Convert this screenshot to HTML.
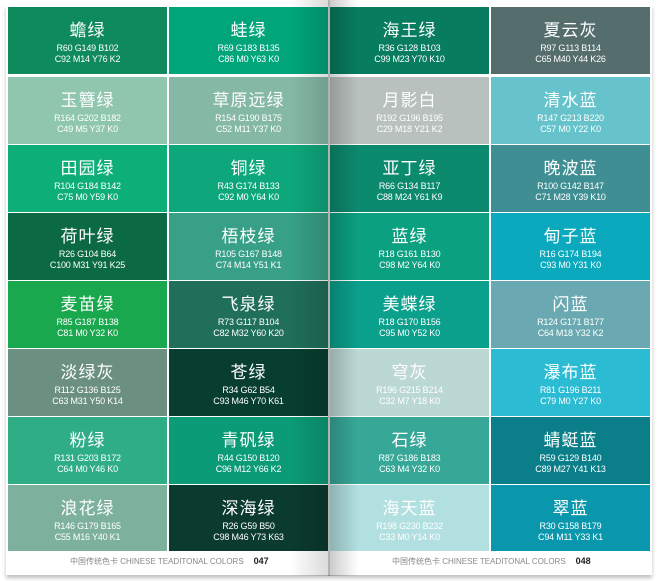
<!DOCTYPE html><html><head><meta charset="utf-8"><style>
body{margin:0;width:658px;height:581px;background:#fff;position:relative;overflow:hidden;font-family:"Liberation Sans","Noto Sans CJK SC",sans-serif}
.c{position:absolute;color:#fff;text-align:center;width:159px;height:67px}
.n{position:absolute;top:14px;left:0;right:0;font-size:17px;line-height:19px;letter-spacing:1px}
.v{position:absolute;top:36px;left:0;right:0;font-size:9px;line-height:11px;letter-spacing:-0.2px}
.f{position:absolute;top:555px;font-size:8px;color:#888;white-space:nowrap;line-height:12px}
.f b{color:#222;font-size:9px;margin-left:10px}
.sh{position:absolute;top:0;height:576px;pointer-events:none}
</style></head><body>
<div style="position:absolute;left:6px;top:5px;width:646px;height:570px;box-shadow:0 3px 4px rgba(0,0,0,0.25);background:#fff"></div>
<div id="g"></div>
<script>
var X=[8,169,330,491],Y=[7,77,145,213,281,349,417,485];
var d=[
[["蟾绿","R60 G149 B102","C92 M14 Y76 K2","#0f8a5c"],["玉簪绿","R164 G202 B182","C49 M5 Y37 K0","#8fc6ad"],["田园绿","R104 G184 B142","C75 M0 Y59 K0","#0eae78"],["荷叶绿","R26 G104 B64","C100 M31 Y91 K25","#0b6a44"],["麦苗绿","R85 G187 B138","C81 M0 Y32 K0","#19a84d"],["淡绿灰","R112 G136 B125","C63 M31 Y50 K14","#6b8f80"],["粉绿","R131 G203 B172","C64 M0 Y46 K0","#2fae86"],["浪花绿","R146 G179 B165","C55 M16 Y40 K1","#7db19e"]],
[["蛙绿","R69 G183 B135","C86 M0 Y63 K0","#00a57a"],["草原远绿","R154 G190 B175","C52 M11 Y37 K0","#85b9a6"],["铜绿","R43 G174 B133","C92 M0 Y64 K0","#0ea77c"],["梧枝绿","R105 G167 B148","C74 M14 Y51 K1","#37a086"],["飞泉绿","R73 G117 B104","C82 M32 Y60 K20","#1f6f5a"],["苍绿","R34 G62 B54","C93 M46 Y70 K61","#083e2f"],["青矾绿","R44 G150 B120","C96 M12 Y66 K2","#0b9b76"],["深海绿","R26 G59 B50","C98 M46 Y73 K63","#0b3a2e"]],
[["海王绿","R36 G128 B103","C99 M23 Y70 K10","#077c5e"],["月影白","R192 G196 B195","C29 M18 Y21 K2","#b9c1bf"],["亚丁绿","R66 G134 B117","C88 M24 Y61 K9","#0c8a6e"],["蓝绿","R18 G161 B130","C98 M2 Y64 K0","#0aa080"],["美蝶绿","R18 G170 B156","C95 M0 Y52 K0","#0aa08c"],["穹灰","R196 G215 B214","C32 M7 Y18 K0","#bcd8d4"],["石绿","R87 G186 B183","C63 M4 Y32 K0","#37a898"],["海天蓝","R198 G230 B232","C33 M0 Y14 K0","#b2dfe0"]],
[["夏云灰","R97 G113 B114","C65 M40 Y44 K26","#566d6d"],["清水蓝","R147 G213 B220","C57 M0 Y22 K0","#66c3cb"],["晚波蓝","R100 G142 B147","C71 M28 Y39 K10","#3f8e93"],["甸子蓝","R16 G174 B194","C93 M0 Y31 K0","#0aa9bd"],["闪蓝","R124 G171 B177","C64 M18 Y32 K2","#6aa9b1"],["瀑布蓝","R81 G196 B211","C79 M0 Y27 K0","#2bbbd2"],["蜻蜓蓝","R59 G129 B140","C89 M27 Y41 K13","#0a7f8a"],["翠蓝","R30 G158 B179","C94 M11 Y33 K1","#0a97ad"]]];
var h="";
for(var i=0;i<4;i++)for(var j=0;j<8;j++){var e=d[i][j];var hh=(j==7)?66:67;
h+='<div class="c" style="left:'+X[i]+'px;top:'+Y[j]+'px;height:'+hh+'px;background:'+e[3]+'"><div class="n">'+e[0]+'</div><div class="v">'+e[1]+'<br>'+e[2]+'</div></div>';}
document.getElementById("g").innerHTML=h;
</script>
<div class="sh" style="left:290px;width:38px;background:linear-gradient(to right,rgba(0,0,0,0),rgba(0,0,0,0.14))"></div>
<div class="sh" style="left:328px;width:2px;background:rgba(0,0,0,0.3)"></div>
<div class="sh" style="left:330px;width:28px;background:linear-gradient(to right,rgba(0,0,0,0.2),rgba(0,0,0,0))"></div>
<div class="f" style="left:70px">中国传统色卡 CHINESE TEADITONAL COLORS<b>047</b></div>
<div class="f" style="left:392px">中国传统色卡 CHINESE TEADITONAL COLORS<b>048</b></div>
</body></html>
